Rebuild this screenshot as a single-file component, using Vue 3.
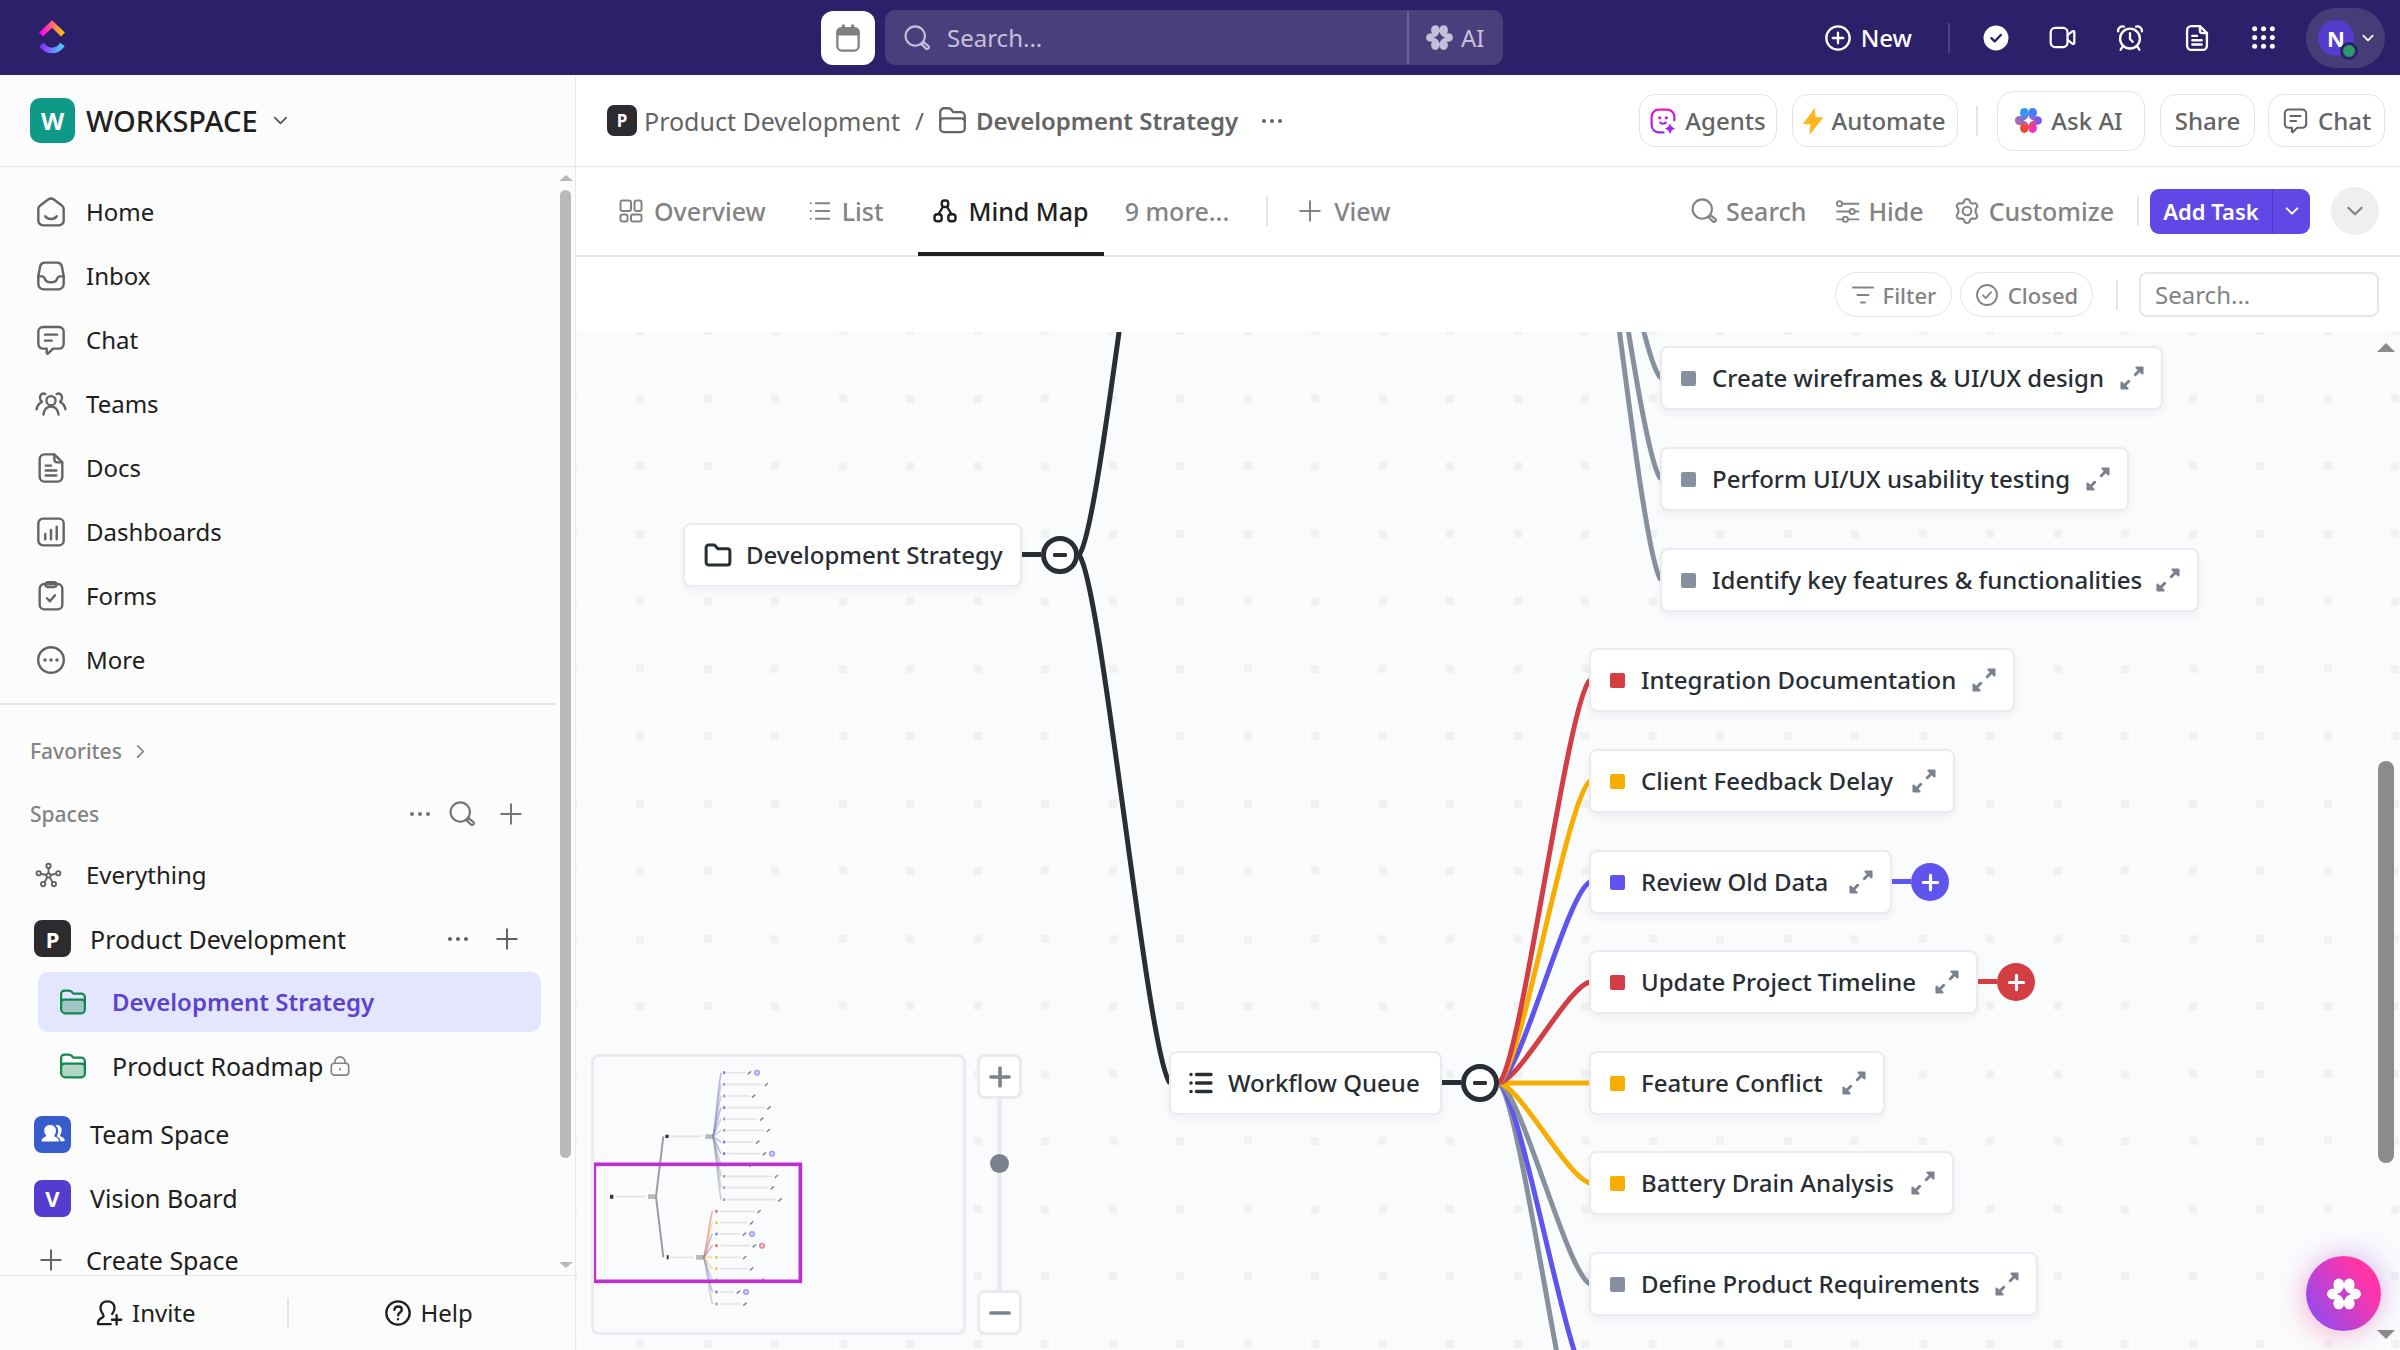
<script setup>
import { h } from 'vue'

const flower = (star) => `<g fill="currentColor" stroke="none"><ellipse cx="8.3" cy="5.4" rx="3.8" ry="4.4"/><ellipse cx="15.7" cy="5.4" rx="3.8" ry="4.4"/><ellipse cx="8.3" cy="18.6" rx="3.8" ry="4.4"/><ellipse cx="15.7" cy="18.6" rx="3.8" ry="4.4"/><ellipse cx="4.3" cy="12" rx="4.3" ry="3.8"/><ellipse cx="19.7" cy="12" rx="4.3" ry="3.8"/><circle cx="12" cy="12" r="6.4"/></g><path d="M12 6.8c1 3 2.2 4.200 5.200 5.200c-3 1-4.200 2.200-5.200 5.200c-1-3-2.200-4.200-5.200-5.200c3-1 4.200-2.200 5.200-5.200z" fill="${star}" stroke="none"/>`

const icons = {
  home: '<path d="M2.500 9.800c0-1.100.5-2.100 1.400-2.700l6.200-4.600a3.200 3.200 0 0 1 3.800 0l6.200 4.600c.9.6 1.400 1.600 1.400 2.700V18.500a3.500 3.500 0 0 1-3.500 3.500H6a3.500 3.500 0 0 1-3.500-3.500z"/><path d="M7.700 15.200c1.900 2.700 6.700 2.700 8.600 0"/>',
  inbox: '<path d="M7.500 2h9c1.800 0 3.100.8 3.600 2.600l1.400 7.400v6a4 4 0 0 1-4 4h-11a4 4 0 0 1-4-4v-6l1.400-7.400C4.400 2.800 5.700 2 7.500 2z"/><path d="M2.500 12.300h2.700c1.500 0 1.900.7 2.300 2 .5 1.600 1.500 2.400 4.500 2.400s4-.8 4.500-2.400c.4-1.300.8-2 2.300-2h2.700"/>',
  chat: '<path d="M6 2.200h12a3.500 3.500 0 0 1 3.500 3.500V15a3.500 3.500 0 0 1-3.500 3.500h-4.500L9.700 22.200c-.4.4-.9.1-.9-.4v-3.300H6A3.500 3.500 0 0 1 2.500 15V5.700A3.500 3.500 0 0 1 6 2.200z"/><path d="M7.500 8h9M7.500 12.500h5"/>',
  teams: '<circle cx="12" cy="9.500" r="3.400"/><path d="M6.400 20c.5-4 2.600-6 5.600-6s5.100 2 5.600 6"/><path d="M7.800 4.500C5.500 3.500 3.600 5 3.700 7.300c.1 1.300.6 2.300 1.500 3M4.600 10.800C2.800 11.800 1.600 13.500 1.200 16M16.200 4.500c2.300-1 4.200.5 4.100 2.800-.1 1.300-.6 2.300-1.500 3M19.400 10.800c1.800 1 3 2.700 3.400 5.200"/>',
  doc: '<path d="M7 1.800h7.500l6 6V18.700a3.500 3.500 0 0 1-3.500 3.500H7a3.500 3.500 0 0 1-3.500-3.500V5.300A3.500 3.500 0 0 1 7 1.800z"/><path d="M14.500 2v3.500c0 1.500.8 2.300 2.300 2.300h3.500M8 10.200h4M8 13.900h8M8 17.600h8"/>',
  dash: '<rect x="2.500" y="2" width="19" height="20" rx="3.500"/><path d="M7.700 13.500v4M12 10.500v7M16.300 8v9.500"/>',
  form: '<rect x="3.500" y="3" width="17" height="19" rx="3.500"/><path d="M8 3.200c0-1 .7-1.500 1.600-1.500h4.800c.9 0 1.600.5 1.600 1.500v.6c0 .8-.7 1.400-1.600 1.400H9.600C8.700 5.200 8 4.600 8 3.800zM9 13.700l2.200 2.300 3.800-4.600"/>',
  more: '<circle cx="12" cy="12" r="9.600"/><g fill="currentColor" stroke="none"><circle cx="7.500" cy="12" r="1.300"/><circle cx="12" cy="12" r="1.300"/><circle cx="16.500" cy="12" r="1.300"/></g>',
  dots: '<g fill="currentColor" stroke="none"><circle cx="4" cy="12" r="2"/><circle cx="12" cy="12" r="2"/><circle cx="20" cy="12" r="2"/></g>',
  search: '<circle cx="10.500" cy="10.300" r="8.300"/><path d="M16.200 17.700l1.700-1.900 3.600 2.900c.8.700.9 1.500.3 2.200s-1.500.7-2.200 0z"/>',
  plus: '<path d="M12 3v18M3 12h18"/>',
  minus: '<path d="M3 12h18"/>',
  down: '<path d="M4 8l8 8 8-8"/>',
  right: '<path d="M8 4l8 8-8 8"/>',
  hub: '<circle cx="12" cy="12" r="1.900"/><circle cx="12" cy="3.500" r="1.900"/><circle cx="3.300" cy="10" r="1.900"/><circle cx="20.700" cy="10" r="1.900"/><circle cx="7.200" cy="19.600" r="1.900"/><circle cx="16.800" cy="19.600" r="1.900"/><path d="M12 5.500V10M5.200 10.500l5 1M18.800 10.500l-5 1M8.300 18l2.600-4.300M15.700 18l-2.600-4.300"/>',
  greenFolder: '<path d="M3 10.500h18v7.500a3 3 0 0 1-3 3H6a3 3 0 0 1-3-3z" fill="currentColor" fill-opacity=".32" stroke="none"/><path d="M2.500 17.500V5.500A2.700 2.700 0 0 1 5.200 2.800h3.400c1 0 1.700.3 2.300 1l1.300 1.500h6.300A3 3 0 0 1 21.500 8.300v9.700a3 3 0 0 1-3 3H6a3.500 3.500 0 0 1-3.500-3.500zM2.500 12.500c0-1.700 1-2.500 2.700-2.500h13.600c1.700 0 2.700.8 2.700 2.500"/>',
  folder: '<path d="M2.500 18V5.500A3 3 0 0 1 5.500 2.500h3.200c1 0 1.700.3 2.300 1l1.500 2h6A3 3 0 0 1 21.500 8.500V18a3 3 0 0 1-3 3h-13a3 3 0 0 1-3-3zM2.500 13c0-1.700 1-2.600 2.700-2.600h13.600c1.700 0 2.700.9 2.700 2.600"/>',
  folderBold: '<path d="M2.500 18V6A2 2 0 0 1 4.500 4h4.700l2.700 3h7.600a2 2 0 0 1 2 2v9a2 2 0 0 1-2 2h-15a2 2 0 0 1-2-2z"/>',
  lock: '<rect x="2.500" y="9" width="19" height="13" rx="3.500"/><path d="M6.500 9V7.500a5.500 5.500 0 0 1 11 0V9M12 14.800v1.500"/>',
  team: '<g fill="currentColor" stroke="none"><path d="M14.500 3.200c3-.9 6.200 1.200 6.200 4.800 0 2.100-.8 3.700-1.600 4.900 0 1.200.8 1.500 2 2.100 1.700.9 2.600 1.900 2.600 4.200h-4.300c-.2-2.600-1.500-3.800-3.700-4.800.9-1.500 1.500-3.100 1.500-5.400 0-2.400-1-4.500-2.700-5.800z"/><path d="M9 3c3.600 0 6 2.300 6 5.700 0 2.200-.9 3.500-1.800 4.500 0 1.200.9 1.500 2 2 1.700.8 2.700 1.800 2.700 4.300H.5c0-2.500 1-3.500 2.700-4.300 1.100-.5 2-.8 2-2C4.100 12.200 3.200 10.900 3.200 8.700 3.200 5.300 5.500 3 9 3z"/></g>',
  invite: '<path d="M13.500 21.500H2.600c-.5-3.500 1.500-4.600 3.600-5.500 1.300-.6 1.400-1.700.6-2.900C5.600 11.500 4.700 10 4.700 7.800c0-3.500 2.400-5.800 6-5.800s6 2.300 6 5.800c0 2-.9 3.700-2 5"/><path d="M18.500 13.800v8M14.500 17.800h8"/>',
  help: '<circle cx="12" cy="12" r="10"/><path d="M8.900 9.300c.2-1.900 1.400-2.900 3.200-2.900s3.200 1.100 3.200 2.800c0 2.300-3.200 2.400-3.200 4.700M12 17.200v.2"/>',
  calendar: '<path d="M3.500 9V7.500a3.500 3.500 0 0 1 3.500-3.500h10a3.500 3.500 0 0 1 3.500 3.500V9z" fill="currentColor"/><rect x="3.500" y="4" width="17" height="18" rx="3.500"/><path d="M8.300 2.200v3.500M15.700 2.200v3.500" stroke-width="2.600"/>',
  plusCircle: '<circle cx="12" cy="12" r="10"/><path d="M12 7.500v9M7.500 12h9"/>',
  checkFill: '<circle cx="12" cy="12" r="11.500" fill="currentColor" stroke="none"/><path d="M7.800 12.200l3 3 5.600-6" stroke="#2b2069"/>',
  check: '<circle cx="12" cy="12" r="10"/><path d="M8 12.300l2.800 2.800 5.300-6"/>',
  video: '<rect x="1.500" y="3.500" width="15" height="17" rx="4"/><path d="M16.500 10l4.200-3.400c.9-.7 1.800-.3 1.800.8v9.200c0 1.100-.9 1.500-1.800.8L16.500 14"/>',
  alarm: '<circle cx="12" cy="12.500" r="8.500"/><path d="M12 7.800v5l2.300 2.400M1.800 6.300C1.600 3.500 4 1.500 6.800 2.200M22.200 6.300c.2-2.800-2.200-4.800-5-4.100M5.800 19.200L4 22M18.200 19.200L20 22"/>',
  grid: '<g fill="currentColor" stroke="none">' + [3.5, 12, 20.5].map((y) => [3.5, 12, 20.5].map((x) => `<circle cx="${x}" cy="${y}" r="2.400"/>`).join('')).join('') + '</g>',
  aiTop: flower('#4a3f7c'),
  aiFab: flower('#c93fc9'),
  aiColor: '<defs><linearGradient id="aic" x1=".3" y1="0" x2=".6" y2="1"><stop offset="0" stop-color="#4a8bfd"/><stop offset=".45" stop-color="#7a6fd8"/><stop offset=".7" stop-color="#e0508a"/><stop offset="1" stop-color="#f2403a"/></linearGradient></defs><g stroke="none"><g fill="url(#aic)"><circle cx="12" cy="12" r="7"/><ellipse cx="4.300" cy="12" rx="4.300" ry="4"/></g><ellipse cx="8.300" cy="5.200" rx="3.800" ry="4.400" fill="#2f9be8"/><ellipse cx="15.700" cy="5.200" rx="3.800" ry="4.400" fill="#3f7cff"/><ellipse cx="19.700" cy="12" rx="4.300" ry="3.800" fill="#7c55ee"/><ellipse cx="8.300" cy="18.700" rx="3.800" ry="4.400" fill="#ee4a2c"/><ellipse cx="15.700" cy="18.700" rx="3.800" ry="4.400" fill="#f231c0"/><ellipse cx="4.300" cy="12" rx="4.300" ry="3.800" fill="#a46ab4"/><circle cx="12" cy="12" r="6" fill="url(#aic)"/><path d="M12 7.300c.7 2.900 1.800 4 4.700 4.700c-2.900.7-4 1.800-4.700 4.700c-.7-2.900-1.800-4-4.700-4.700c2.900-.7 4-1.800 4.700-4.700z" fill="#fff"/></g>',
  agent: '<defs><linearGradient id="agg" x1="0" y1="0" x2="0" y2="1"><stop offset="0" stop-color="#e516c8"/><stop offset="1" stop-color="#8a2df5"/></linearGradient></defs><path stroke="url(#agg)" d="M22.500 11.500V8A6.500 6.500 0 0 0 16 1.500H8A6.500 6.500 0 0 0 1.500 8v8A6.500 6.500 0 0 0 8 22.500h4.500"/><path stroke="#b61fe0" d="M9.500 13.500c1.300 1.300 3.700 1.300 5 0"/><g stroke="none" fill="#d11ad6"><circle cx="9" cy="9" r="1.500"/><circle cx="15" cy="9" r="1.500"/></g><path stroke="none" fill="#9a2bf0" d="M18.500 13.800c.9 3 2 4.200 5.200 5.200c-3.200 1-4.300 2.200-5.200 5.200c-.9-3-2-4.200-5.200-5.200c3.200-1 4.300-2.200 5.200-5.200z"/>',
  bolt: '<path d="M13.500 1L3.500 14.500h6.700L9.200 23.500 20.700 9h-6.900z" fill="#ffb51f" stroke="#ffb51f" stroke-width="1"/>',
  overview: '<rect x="1.500" y="1.500" width="10.500" height="10.500" rx="2"/><rect x="15.500" y="1.500" width="7" height="10.500" rx="2"/><rect x="1.500" y="15.500" width="7" height="7" rx="2"/><rect x="12" y="15.500" width="10.500" height="7" rx="2"/>',
  list: '<path d="M7.500 3.500H22M7.500 12H22M7.500 20.500H22M2 3.500h.1M2 12h.1M2 20.500h.1"/>',
  mind: '<rect x="8.800" y="1.500" width="6.400" height="6.500" rx="2.600"/><rect x="1.500" y="15.300" width="7.200" height="7" rx="2.800"/><rect x="15.300" y="15.300" width="7.200" height="7" rx="2.800"/><path d="M9.800 8l-4.200 7M14.200 8l4.200 7"/>',
  sliders: '<path d="M7 4.500h15.500M2 12h12M19 12h3.500M2 19.500h5.500M12.500 19.500h10"/><circle cx="4.300" cy="4.500" r="2.500"/><circle cx="16.500" cy="12" r="2.500"/><circle cx="10" cy="19.500" r="2.500"/>',
  gear: '<circle cx="12" cy="12" r="3.700"/><path d="M10.200 2.400c.9-.8 2.700-.8 3.600 0l1.100 2.300 1.500.9 2.500-.3c1.200.3 2.100 1.800 1.800 3l-1.300 2.200v3l1.300 2.200c.3 1.200-.6 2.700-1.800 3l-2.500-.3-1.500.9-1.100 2.300c-.9.800-2.700.8-3.600 0l-1.100-2.300-1.500-.9-2.500.3c-1.200-.3-2.100-1.800-1.800-3l1.300-2.200v-3L3.300 8.300c-.3-1.200.6-2.700 1.800-3l2.500.3 1.500-.9z"/>',
  filter: '<path d="M2 4.500h20M6.500 12h11M10 19.500h4"/>',
  expand: '<path d="M14.800 9.200l4.700-4.700M9.200 14.800l-4.700 4.700"/><path d="M15.800 3h5.200v5.200zM8.200 21H3v-5.200z" fill="currentColor" stroke-width="1.800"/>',
}

const Icon = (p) => h('svg', {
  width: p.s || 24, height: p.s || 24, viewBox: '0 0 24 24', fill: 'none',
  stroke: 'currentColor', 'stroke-width': p.w || 1.8, 'stroke-linecap': 'round',
  'stroke-linejoin': 'round', 'aria-hidden': 'true', innerHTML: icons[p.n],
})
Icon.props = ['n', 's', 'w']

const nav = [
  ['home', 'Home'], ['inbox', 'Inbox'], ['chat', 'Chat'], ['teams', 'Teams'],
  ['doc', 'Docs'], ['dash', 'Dashboards'], ['form', 'Forms'], ['more', 'More'],
]

const C = { grey: '#87909e', red: '#d33d44', yellow: '#f8ae00', blue: '#5f55ee', dark: '#292d34' }

const tasks = [
  { label: 'Create wireframes & UI/UX design', x: 1084, y: 46, w: 503, c: C.grey },
  { label: 'Perform UI/UX usability testing', x: 1084, y: 147, w: 469, c: C.grey },
  { label: 'Identify key features & functionalities', x: 1084, y: 248, w: 539, c: C.grey },
  { label: 'Integration Documentation', x: 1013, y: 348, w: 426, c: C.red },
  { label: 'Client Feedback Delay', x: 1013, y: 449, w: 366, c: C.yellow },
  { label: 'Review Old Data', x: 1013, y: 550, w: 303, c: C.blue, more: true },
  { label: 'Update Project Timeline', x: 1013, y: 650, w: 389, c: C.red, more: true },
  { label: 'Feature Conflict', x: 1013, y: 751, w: 296, c: C.yellow },
  { label: 'Battery Drain Analysis', x: 1013, y: 851, w: 365, c: C.yellow },
  { label: 'Define Product Requirements', x: 1013, y: 952, w: 449, c: C.grey },
]

const link = (x0, y0, x1, y1) => {
  const dx = (x1 - x0) / 4
  const dy = (y1 - y0) / 20
  return `M${x0} ${y0}C${x0 + dx} ${y0 + dy} ${x1 - dx} ${y1 - dy} ${x1} ${y1}`
}

const links = [
  [503, 223, 594, -302, C.dark], [503, 223, 594, 751, C.dark],
  [995, -302, 1085, 46, C.grey], [995, -302, 1085, 147, C.grey], [995, -302, 1085, 248, C.grey],
  [923, 751, 1014, 1154, C.grey], [923, 751, 1014, 1054, C.blue], [923, 751, 1014, 952, C.grey],
  [923, 751, 1014, 851, C.yellow], [923, 751, 1014, 751, C.yellow], [923, 751, 1014, 650, C.red],
  [923, 751, 1014, 550, C.blue], [923, 751, 1014, 449, C.yellow], [923, 751, 1014, 348, C.red],
].map(([a, b, c, d, color]) => ({ d: link(a, b, c, d), color }))

const miniTop = [
  [128, 555, C.blue, true], [163, 606, C.grey], [198, 568, C.grey], [233, 614, C.blue], [267, 592, C.grey],
  [301, 612, C.grey], [336, 580, C.blue], [371, 600, C.blue, true], [405, 560, C.grey], [439, 636, C.grey],
  [473, 624, C.grey], [509, 647, C.grey],
]
const miniLow = [
  [544, 584, C.red], [578, 562, C.yellow], [612, 540, C.blue, true], [647, 570, C.red, true], [682, 541, C.yellow],
  [716, 562, C.yellow], [750, 594, C.grey], [786, 522, C.blue, true], [822, 542, C.grey],
]
</script>

<template>
  <div class="app">
    <header class="topbar">
      <a class="logo" href="#" aria-label="Home">
        <svg width="26" height="36" viewBox="0 0 26 36">
          <defs>
            <linearGradient id="lg1" x1="0" x2="1"><stop offset="0" stop-color="#ff02f0" /><stop offset="1" stop-color="#ffc800" /></linearGradient>
            <linearGradient id="lg2" x1="0" x2="1"><stop offset="0" stop-color="#8930fd" /><stop offset="1" stop-color="#49ccf9" /></linearGradient>
          </defs>
          <path d="M2 14.500L13 4l11 10.500" fill="none" stroke="url(#lg1)" stroke-width="5.500" />
          <path d="M2.500 24.500C8.500 32.500 17.500 32.500 23.500 24.500" fill="none" stroke="url(#lg2)" stroke-width="5.500" />
        </svg>
      </a>
      <div class="top-mid">
        <button class="cal" aria-label="Calendar"><Icon n="calendar" :s="30" /></button>
        <div class="gsearch">
          <Icon n="search" :s="28" />
          <input type="text" placeholder="Search..." aria-label="Search everything" />
          <button class="gai"><Icon n="aiTop" :s="27" />AI</button>
        </div>
      </div>
      <div class="top-right">
        <button class="new"><Icon n="plusCircle" :s="28" w="2" />New</button>
        <i class="vr"></i>
        <button class="ti" aria-label="Tasks"><Icon n="checkFill" :s="26" w="2.200" /></button>
        <button class="ti" aria-label="Clips"><Icon n="video" :s="27" w="2" /></button>
        <button class="ti" aria-label="Reminders"><Icon n="alarm" :s="28" w="2" /></button>
        <button class="ti" aria-label="Docs"><Icon n="doc" :s="28" w="2" /></button>
        <button class="ti" aria-label="Apps"><Icon n="grid" :s="25" /></button>
        <button class="user" aria-label="Account"><span class="ava">N</span><Icon n="down" :s="14" w="3" /></button>
      </div>
    </header>

    <div class="body">
      <aside class="side">
        <button class="ws"><span class="badge teal">W</span><b>WORKSPACE</b><Icon n="down" :s="17" w="2.500" /></button>
        <div class="scroll">
          <div class="scroll-in">
            <nav class="nav">
              <a v-for="[i, t] in nav" :key="t" href="#"><Icon :n="i" :s="32" />{{ t }}</a>
            </nav>
            <section class="spaces">
              <button class="fav">Favorites<Icon n="right" :s="17" w="2.400" /></button>
              <div class="sp-head">
                <h2>Spaces</h2>
                <button aria-label="Space options"><Icon n="dots" :s="24" /></button>
                <button aria-label="Search spaces"><Icon n="search" :s="28" /></button>
                <button aria-label="New space"><Icon n="plus" :s="26" /></button>
              </div>
              <a href="#" class="every"><Icon n="hub" :s="27" w="1.700" />Everything</a>
              <div class="prod">
                <a href="#"><span class="badge sm black">P</span>Product Development</a>
                <button aria-label="Options"><Icon n="dots" :s="24" /></button>
                <button aria-label="Add"><Icon n="plus" :s="26" /></button>
              </div>
              <a href="#" class="sub active"><Icon n="greenFolder" :s="30" />Development Strategy</a>
              <a href="#" class="sub"><Icon n="greenFolder" :s="30" />Product Roadmap<Icon class="lk" n="lock" :s="22" /></a>
              <a href="#" class="space"><span class="badge sm royal"><Icon n="team" :s="24" /></span>Team Space</a>
              <a href="#" class="space short"><span class="badge sm violet">V</span>Vision Board</a>
              <a href="#" class="create"><Icon n="plus" :s="26" />Create Space</a>
            </section>
          </div>
          <div class="sbar"><i class="up"></i><i class="thumb"></i><i class="gap"></i><i class="dn"></i></div>
        </div>
        <footer class="foot">
          <button><Icon n="invite" :s="28" w="2" />Invite</button>
          <i class="vr"></i>
          <button><Icon n="help" :s="28" w="2" />Help</button>
        </footer>
      </aside>

      <main class="main">
        <div class="crumbs">
          <a href="#" class="crumb"><span class="badge xs black">P</span>Product Development</a>
          <span class="slash">/</span>
          <a href="#" class="crumb cur"><Icon n="folder" :s="31" />Development Strategy</a>
          <button class="plain" aria-label="More"><Icon n="dots" :s="24" /></button>
          <div class="acts">
            <button class="pill agents"><Icon n="agent" :s="26" w="2" />Agents</button>
            <button class="pill auto"><Icon n="bolt" :s="26" />Automate</button>
            <i class="vr"></i>
            <button class="pill ask"><Icon n="aiColor" :s="27" />Ask AI</button>
            <button class="pill share">Share</button>
            <button class="pill chat"><Icon n="chat" :s="27" />Chat</button>
          </div>
        </div>

        <div class="tabs">
          <a href="#" class="tab"><Icon n="overview" :s="24" w="2" />Overview</a>
          <a href="#" class="tab"><Icon n="list" :s="22" w="2.200" />List</a>
          <a href="#" class="tab on"><Icon n="mind" :s="24" w="2.400" />Mind Map</a>
          <a href="#" class="tab nine">9 more...</a>
          <i class="vr"></i>
          <button class="tab"><Icon n="plus" :s="26" />View</button>
          <div class="tools">
            <button><Icon n="search" :s="28" />Search</button>
            <button><Icon n="sliders" :s="25" />Hide</button>
            <button><Icon n="gear" :s="28" />Customize</button>
            <i class="vr"></i>
            <div class="add"><button>Add Task</button><button aria-label="More task types"><Icon n="down" :s="16" w="3" /></button></div>
            <button class="round" aria-label="Collapse"><Icon n="down" :s="20" w="2.600" /></button>
          </div>
        </div>

        <div class="filters">
          <button class="fp"><Icon n="filter" :s="24" w="2" />Filter</button>
          <button class="fp closed"><Icon n="check" :s="24" />Closed</button>
          <i class="vr"></i>
          <input type="text" placeholder="Search..." aria-label="Search tasks" />
        </div>

        <div class="canvas">
          <svg class="lines" width="100%" height="100%">
            <defs>
              <pattern id="dots" x="60" y="-5" width="135" height="135" patternUnits="userSpaceOnUse">
                <path d="M0 0h8v8H0zM68 0h8v8h-8zM0 68h8v8H0zM68 68h8v8h-8z" fill="#f0f1f3" />
              </pattern>
            </defs>
            <rect width="100%" height="100%" fill="url(#dots)" />
            <g fill="none" stroke-width="5">
              <path v-for="(l, i) in links" :key="i" :d="l.d" :stroke="l.color" />
            </g>
          </svg>

          <div class="node" :style="{ left: '107px', top: '223px', width: '339px' }">
            <Icon n="folderBold" :s="30" w="2.400" /><span>Development Strategy</span>
            <button class="knob fold" aria-label="Collapse branch"><Icon n="minus" :s="14" w="7" /></button>
          </div>
          <div class="node" :style="{ left: '593px', top: '751px', width: '273px' }">
            <Icon n="list" :s="24" w="3.400" /><span class="wf">Workflow Queue</span>
            <button class="knob fold" aria-label="Collapse branch"><Icon n="minus" :s="14" w="7" /></button>
          </div>

          <div v-for="t in tasks" :key="t.label" class="node task" :style="{ left: t.x + 'px', top: t.y + 'px', width: t.w + 'px', '--c': t.c }">
            <i class="sq"></i><span>{{ t.label }}</span>
            <button class="exp" aria-label="Open task"><Icon n="expand" :s="28" w="2.600" /></button>
            <button v-if="t.more" class="knob open" aria-label="Expand branch"><Icon n="plus" :s="19" w="4" /></button>
          </div>

          <div class="mini">
            <svg width="369" height="275" viewBox="102 81 1107 825" fill="none">
              <g stroke="#9a9ea4" stroke-width="6">
                <path d="M288 500L310 319M288 500L310 682" />
                <path d="M264 500h24M436 320h22M408 682h22" stroke-width="14" stroke-opacity=".7" />
              </g>
              <path d="M168 500h88M330 319h94M330 682h70" stroke="#e2e4e4" stroke-width="5" />
              <path d="M150 494h10v12h-10zM316 314h10v10h-10zM320 676h6v12h-6z" fill="#33373c" />
              <g stroke-width="5" stroke-opacity=".4">
                <path v-for="[y, e, c] in miniTop" :key="'a' + y" :d="link(458, 320, 484, y)" :stroke="c" />
                <path v-for="[y, e, c] in miniLow" :key="'b' + y" :d="link(430, 682, 458, y)" :stroke="c" />
              </g>
              <g v-for="[y, e, c, m] in miniTop" :key="'c' + y">
                <rect x="489" :y="y - 4" width="7" height="8" :fill="c" opacity=".8" />
                <path :d="`M500 ${y}H${e}`" stroke="#e2e4e4" stroke-width="5" />
                <path :d="`M${e + 8} ${y + 5}l10 -9`" stroke="#8b8f95" stroke-width="5" />
                <circle v-if="m" :cx="e + 36" :cy="y" r="7" :stroke="c" :fill="c" fill-opacity=".4" stroke-width="4" opacity=".6" />
              </g>
              <g v-for="[y, e, c, m] in miniLow" :key="'d' + y">
                <rect x="466" :y="y - 4" width="7" height="8" :fill="c" opacity=".8" />
                <path :d="`M479 ${y}H${e}`" stroke="#e2e4e4" stroke-width="5" />
                <path :d="`M${e + 8} ${y + 5}l10 -9`" stroke="#8b8f95" stroke-width="5" />
                <circle v-if="m" :cx="e + 36" :cy="y" r="7" :stroke="c" :fill="c" fill-opacity=".4" stroke-width="4" opacity=".6" />
              </g>
              <rect x="103" y="403" width="618" height="351" stroke="#bd30cf" stroke-width="11" />
            </svg>
          </div>
          <div class="zoomer">
            <button aria-label="Zoom in"><Icon n="plus" :s="24" w="3.600" /></button>
            <div class="track"><i></i></div>
            <button aria-label="Zoom out"><Icon n="minus" :s="24" w="3.600" /></button>
          </div>
          <button class="fab" aria-label="Assistant"><Icon n="aiFab" :s="34" /></button>
          <div class="cbar"><i class="up"></i><i class="g1"></i><i class="thumb"></i><i class="g2"></i><i class="dn"></i></div>
        </div>
      </main>
    </div>
  </div>
</template>

<style>
body { margin: 0; overflow: hidden; }
</style>

<style scoped>
.app, .app * { box-sizing: border-box; }
.app { display: flex; flex-direction: column; height: 100vh; background: #fff; color: #202020; font: 400 24px/32px "Noto Sans", "Open Sans", sans-serif; }
button { margin: 0; padding: 0; border: 0; background: none; font: inherit; color: inherit; display: flex; align-items: center; white-space: nowrap; }
a { color: inherit; text-decoration: none; display: flex; align-items: center; white-space: nowrap; }
svg { display: block; flex: none; }
input { font: inherit; color: inherit; outline: 0; min-width: 0; }
input::placeholder { color: inherit; opacity: 1; }
i { display: block; }
.vr { width: 2px; height: 30px; background: #e6e6e8; flex: none; }

.topbar { flex: none; height: 75px; background: #2b2069; display: grid; grid-template-columns: 1fr 682px 1fr; align-items: center; color: #fff; }
.logo { margin-left: 39px; }
.top-mid { display: flex; align-items: center; gap: 10px; margin-left: -38px; margin-right: 38px; }
.cal { width: 54px; height: 54px; border-radius: 12px; background: #fff; color: #808080; justify-content: center; flex: none; }
.gsearch { flex: 1; height: 55px; border-radius: 10px; background: #4a3f7c; color: #c5c0da; display: flex; align-items: center; padding-left: 18px; }
.gsearch input { flex: 1; border: 0; background: none; padding: 0 0 0 16px; height: 40px; }
.gai { width: 96px; height: 53px; border-left: 2px solid #6a6195; padding-left: 17px; gap: 8px; }
.top-right { display: flex; align-items: center; justify-content: flex-end; padding-right: 15px; }
.new { gap: 9px; font-weight: 500; margin-right: 36px; }
.topbar .vr { background: #4b4180; margin-right: 12px; }
.ti { width: 67px; height: 48px; justify-content: center; }
.user { width: 79px; height: 60px; border-radius: 30px; background: #463c78; margin-left: 9px; padding-left: 12px; gap: 7px; }
.ava { position: relative; width: 36px; height: 36px; border-radius: 50%; background: #553bce; display: grid; place-items: center; font-weight: 700; font-size: 22px; }
.ava::after { content: ""; position: absolute; right: -4px; bottom: -4px; width: 12px; height: 12px; border-radius: 50%; background: #2c9a6a; border: 3px solid #2b2069; }

.body { flex: 1; min-height: 0; display: flex; }
.side { flex: 0 0 576px; display: flex; flex-direction: column; background: #fcfcfc; border-right: 1px solid #e8e8ee; min-height: 0; }
.ws { flex: none; height: 92px; border-bottom: 1px solid #e6e6e6; padding-left: 30px; gap: 11px; font-size: 29px; text-align: left; }
.ws b { font-weight: 500; margin-right: 3px; }
.ws svg { color: #555; }
.badge { display: grid; place-items: center; color: #fff; font-weight: 700; border-radius: 10px; flex: none; width: 45px; height: 45px; font-size: 24px; }
.badge.sm { width: 37px; height: 37px; border-radius: 8px; font-size: 22px; margin-right: 19px; }
.badge.xs { width: 30px; height: 31px; border-radius: 7px; font-size: 17px; margin-right: 7px; }
.teal { background: #0f9a87; } .black { background: #2b2b30; } .royal { background: #375dcd; } .violet { background: #533cce; }
.scroll { flex: 1; min-height: 0; display: flex; }
.scroll-in { flex: 1; overflow: hidden; }
.nav { padding: 13px 0 11px; border-bottom: 2px solid #e6e6e6; }
.nav a { height: 64px; padding-left: 35px; gap: 19px; }
.nav svg, .every svg, .create svg { color: #646464; }
.spaces { padding-top: 14px; font-size: 25px; }
.fav { height: 64px; padding-left: 30px; gap: 10px; color: #838383; font-size: 21px; font-weight: 500; }
.sp-head { display: flex; align-items: center; height: 62px; padding: 0 32px 0 30px; color: #757575; }
.sp-head h2 { margin: 0 auto 0 0; font-size: 21px; font-weight: 500; color: #838383; }
.sp-head button:nth-of-type(2) { margin: 0 22px 0 16px; }
.every { height: 60px; padding-left: 35px; gap: 24px; font-size: 24px; }
.prod { height: 67px; display: flex; align-items: center; padding: 0 36px 0 34px; }
.prod a { margin-right: auto; }
.prod button { color: #606060; margin-left: 24px; }
.sub { height: 60px; margin: 0 15px 0 38px; padding-left: 20px; gap: 24px; border-radius: 10px; }
.sub svg { color: #12874f; }
.sub.active { background: #e4e6ff; color: #5b43d0; font-weight: 600; font-size: 24px; }
.sub:not(.active) { height: 68px; }
.sub .lk { color: #838383; margin-left: -18px; }
.space { height: 68px; padding-left: 34px; }
.space.short { height: 60px; }
.create { height: 64px; padding-left: 38px; gap: 22px; }
.sbar { flex: 0 0 19px; display: flex; flex-direction: column; align-items: center; padding: 8px 0 7px; }
.up, .dn { width: 0; height: 0; border: solid transparent; border-width: 0 7px 6px; border-bottom-color: #b9b9b9; flex: none; }
.dn { border-width: 6px 7px 0; border-top-color: #b9b9b9; }
.sbar .thumb { width: 11px; border-radius: 6px; background: #b9b9b9; margin-top: 9px; flex: 968 1 0; }
.gap { flex: 104 1 0; }
.foot { flex: none; height: 75px; border-top: 1px solid #e6e6e6; display: flex; align-items: center; }
.foot button { flex: 1; gap: 9px; padding-left: 95px; }

.main { flex: 1; min-width: 0; display: flex; flex-direction: column; background: #fff; }
.crumbs { flex: none; height: 92px; border-bottom: 1px solid #e6e6e6; display: flex; align-items: center; padding: 0 15px 0 31px; color: #646464; }
.crumb { font-size: 25px; }
.slash { margin: 0 13px 0 15px; }
.cur { font-weight: 600; gap: 8px; font-size: 24px; }
.plain { margin-left: 22px; }
.acts { margin-left: auto; display: flex; align-items: center; }
.pill { height: 53px; border: 1px solid #e4e4e6; border-radius: 16px; font-weight: 500; justify-content: center; gap: 9px; }
.agents { width: 138px; } .auto { width: 166px; margin: 0 18px 0 15px; gap: 5px; padding-right: 4px; }
.ask { width: 148px; height: 60px; margin: 0 15px 0 19px; padding-right: 4px; } .share { width: 95px; margin-right: 13px; } .chat { width: 117px; }

.tabs { flex: none; height: 90px; border-bottom: 2px solid #e6e6e8; display: flex; align-items: center; padding: 0 21px 0 28px; color: #838383; font-size: 25px; font-weight: 500; }
.tab { height: 90px; padding: 0 15px; gap: 11px; }
.tab + .tab { margin-left: 13px; }
.tab.on { color: #202020; border-bottom: 4px solid #202020; border-top: 4px solid transparent; margin-left: 20px; }
.tab + .nine { margin-left: 6px; margin-right: 22px; }
.tabs > .vr + .tab { padding-left: 29px; }
.tools { margin-left: auto; display: flex; align-items: center; }
.tools > button { gap: 8px; margin-right: 29px; }
.tools > .vr { margin: 0 11px 0 -6px; }
.add { display: flex; height: 45px; border-radius: 9px; overflow: hidden; background: #6147e6; color: #fff; font-size: 22px; font-weight: 600; }
.add button { width: 122px; justify-content: center; }
.add button + button { width: 38px; border-left: 1px solid #5138c9; }
.tools > .round { width: 48px; height: 48px; border-radius: 50%; background: #efefef; justify-content: center; margin: 0 0 0 21px; }

.filters { flex: none; height: 75px; display: flex; align-items: center; justify-content: flex-end; padding-right: 21px; color: #838383; font-size: 22px; }
.fp { width: 117px; height: 45px; border: 1px solid #e4e4e6; border-radius: 23px; font-weight: 500; justify-content: center; gap: 8px; }
.closed { width: 133px; margin: 0 23px 0 8px; gap: 9px; }
.filters input { width: 240px; height: 45px; margin-left: 21px; border: 2px solid #e6e6e8; border-radius: 8px; padding: 0 0 0 14px; background: #fff; font-size: 24px; }

.canvas { flex: 1; min-height: 0; position: relative; overflow: hidden; background: #fafbfd; }
.lines { position: absolute; inset: 0; }
.node { position: absolute; height: 64px; margin-top: -32px; background: #fff; border: 2px solid #e9ebf0; border-radius: 8px; box-shadow: 0 4px 8px rgba(30, 40, 60, .05); display: flex; align-items: center; color: #292d34; font-weight: 500; white-space: nowrap; padding-left: 18px; }
.node > span { margin-left: 13px; }
.node > .wf { margin-left: 15px; }
.sq { width: 15px; height: 15px; border-radius: 2px; background: var(--c); flex: none; }
.task { padding-left: 19px; }
.task > span { margin-left: 16px; }
.exp { margin-left: auto; margin-right: 15px; color: #7c828d; }
.knob { position: absolute; left: calc(100% + 21px); top: 11px; width: 38px; height: 38px; border-radius: 50%; justify-content: center; }
.knob::before { content: ""; position: absolute; right: 100%; top: 50%; width: 19px; height: 5px; margin-top: -3px; }
.fold { border: 5px solid #292d34; background: #fff; }
.fold::before { background: #292d34; right: 33px; }
.open, .open::before { background: var(--c); }
.open { color: #fff; }
.mini { position: absolute; left: 15px; bottom: 15px; width: 375px; height: 281px; border: 3px solid #e9ebf0; border-radius: 8px; background: #fafbfd; }
.zoomer { position: absolute; left: 401px; bottom: 15px; height: 281px; width: 45px; display: flex; flex-direction: column; align-items: center; }
.zoomer button { width: 45px; height: 45px; border: 3px solid #e9ebf0; border-radius: 8px; background: #fff; color: #7c828d; justify-content: center; }
.track { flex: 1; width: 5px; background: #e9ebf0; display: flex; justify-content: center; }
.track i { width: 19px; height: 19px; border-radius: 50%; background: #7c828d; flex: none; margin-top: 55px; }
.fab { position: absolute; right: 19px; bottom: 19px; width: 75px; height: 75px; border-radius: 50%; justify-content: center; color: #fff; background: linear-gradient(55deg, #8a4cf5 5%, #ff35a8 75%); box-shadow: -5px 6px 26px rgba(255, 90, 130, .3), 5px -6px 26px rgba(150, 90, 250, .22); }
.cbar { position: absolute; right: 1px; top: 0; bottom: 0; width: 27px; padding: 11px 0; display: flex; flex-direction: column; align-items: center; }
.cbar .up { border-width: 0 9px 9px; border-bottom-color: #8b8b8b; }
.cbar .dn { border-width: 9px 9px 0; border-top-color: #8b8b8b; }
.cbar .thumb { width: 16px; border-radius: 8px; background: #8b8b8b; flex: 402 1 0; }
.g1 { flex: 409 1 0; } .g2 { flex: 167 1 0; }
</style>
